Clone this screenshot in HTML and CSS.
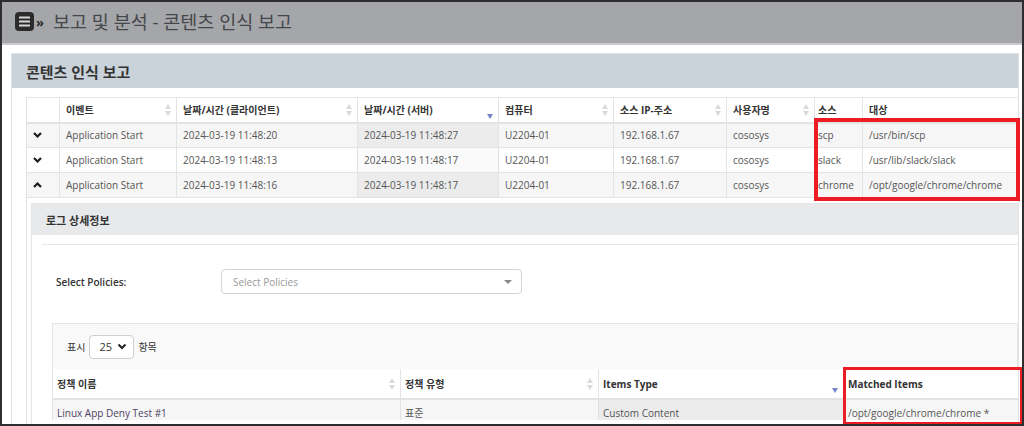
FILE: index.html
```html
<!DOCTYPE html>
<html lang="ko">
<head>
    <meta charset="UTF-8">
    <meta name="viewport" content="width=device-width, initial-scale=1.0">
    <title>콘텐츠 인식 보고</title>
    <link rel="stylesheet" href="styles.css">
</head>
<body>
    <div class="frame">
        <div class="topbar">
            <span class="menu-icon">
                <svg width="19" height="19" viewBox="0 0 19 19">
                    <rect x="0" y="0" width="19" height="19" rx="4" fill="#2b2b2b"/>
                    <rect x="4" y="4.5" width="11" height="2" rx="0.5" fill="#d8d8d8"/>
                    <rect x="4" y="8.5" width="11" height="2" rx="0.5" fill="#d8d8d8"/>
                    <rect x="4" y="12.5" width="11" height="2" rx="0.5" fill="#d8d8d8"/>
                </svg>
            </span>
            <span class="crumb-sep">»</span>
            <h1>보고 및 분석 - 콘텐츠 인식 보고</h1>
        </div>

        <div class="content">
            <div class="panel">
                <div class="panel-heading">콘텐츠 인식 보고</div>
                <div class="panel-body">
                    <table class="grid main-grid">
                        <colgroup>
                            <col style="width:33px">
                            <col style="width:117px">
                            <col style="width:181px">
                            <col style="width:141px">
                            <col style="width:115px">
                            <col style="width:113px">
                            <col style="width:88px">
                            <col style="width:48px">
                            <col>
                        </colgroup>
                        <thead>
                            <tr>
                                <th></th>
                                <th><div class="th-inner">이벤트<span class="sort both"></span></div></th>
                                <th><div class="th-inner">날짜/시간 (클라이언트)<span class="sort both"></span></div></th>
                                <th><div class="th-inner">날짜/시간 (서버)<span class="sort desc"></span></div></th>
                                <th><div class="th-inner">컴퓨터<span class="sort both"></span></div></th>
                                <th><div class="th-inner">소스 IP-주소<span class="sort both"></span></div></th>
                                <th><div class="th-inner">사용자명<span class="sort both"></span></div></th>
                                <th class="tight"><div class="th-inner">소스</div></th>
                                <th><div class="th-inner">대상</div></th>
                            </tr>
                        </thead>
                        <tbody>
                            <tr class="odd">
                                <td class="toggle"><svg width="9" height="6" viewBox="0 0 9 6"><polyline points="1,1 4.5,4.5 8,1" fill="none" stroke="#1e1e1e" stroke-width="2.2"/></svg></td>
                                <td>Application Start</td>
                                <td>2024-03-19 11:48:20</td>
                                <td class="sorted">2024-03-19 11:48:27</td>
                                <td>U2204-01</td>
                                <td>192.168.1.67</td>
                                <td>cososys</td>
                                <td class="tight">scp</td>
                                <td>/usr/bin/scp</td>
                            </tr>
                            <tr class="even">
                                <td class="toggle"><svg width="9" height="6" viewBox="0 0 9 6"><polyline points="1,1 4.5,4.5 8,1" fill="none" stroke="#1e1e1e" stroke-width="2.2"/></svg></td>
                                <td>Application Start</td>
                                <td>2024-03-19 11:48:13</td>
                                <td class="sorted">2024-03-19 11:48:17</td>
                                <td>U2204-01</td>
                                <td>192.168.1.67</td>
                                <td>cososys</td>
                                <td class="tight">slack</td>
                                <td>/usr/lib/slack/slack</td>
                            </tr>
                            <tr class="odd">
                                <td class="toggle"><svg width="9" height="6" viewBox="0 0 9 6"><polyline points="1,5 4.5,1.5 8,5" fill="none" stroke="#1e1e1e" stroke-width="2.2"/></svg></td>
                                <td>Application Start</td>
                                <td>2024-03-19 11:48:16</td>
                                <td class="sorted">2024-03-19 11:48:17</td>
                                <td>U2204-01</td>
                                <td>192.168.1.67</td>
                                <td>cososys</td>
                                <td class="tight">chrome</td>
                                <td>/opt/google/chrome/chrome</td>
                            </tr>
                            <tr class="detail-row">
                                <td colspan="9">
                                    <div class="detail">
                                        <div class="detail-heading">로그 상세정보</div>
                                        <div class="detail-body">
                                            <div class="policy-row">
                                                <label>Select Policies:</label>
                                                <div class="select">
                                                    <span class="placeholder">Select Policies</span>
                                                    <span class="caret"></span>
                                                </div>
                                            </div>
                                            <div class="sub-section">
                                                <div class="length-bar">
                                                    표시
                                                    <span class="len-select">25
                                                        <svg width="10" height="7" viewBox="0 0 10 7"><polyline points="1.5,1.5 5,5 8.5,1.5" fill="none" stroke="#222" stroke-width="2"/></svg>
                                                    </span>
                                                    항목
                                                </div>
                                                <table class="grid sub-grid">
                                                    <colgroup>
                                                        <col style="width:348px">
                                                        <col style="width:198px">
                                                        <col style="width:245px">
                                                        <col>
                                                    </colgroup>
                                                    <thead>
                                                        <tr>
                                                            <th><div class="th-inner">정책 이름<span class="sort both"></span></div></th>
                                                            <th><div class="th-inner">정책 유형<span class="sort both"></span></div></th>
                                                            <th><div class="th-inner">Items Type<span class="sort desc"></span></div></th>
                                                            <th><div class="th-inner">Matched Items</div></th>
                                                        </tr>
                                                    </thead>
                                                    <tbody>
                                                        <tr class="odd">
                                                            <td class="link">Linux App Deny Test #1</td>
                                                            <td>표준</td>
                                                            <td class="sorted">Custom Content</td>
                                                            <td>/opt/google/chrome/chrome *</td>
                                                        </tr>
                                                    </tbody>
                                                </table>
                                            </div>
                                        </div>
                                    </div>
                                </td>
                            </tr>
                        </tbody>
                    </table>
                </div>
            </div>
        </div>

        <div class="mark mark-top"></div>
        <div class="mark mark-bottom"></div>
    </div>
</body>
</html>
```

FILE: styles.css
```css
* {
    box-sizing: border-box;
}

body {
    margin: 0;
    background: #fff;
    font-family: 'Open Sans', 'Noto Sans CJK KR', sans-serif;
    font-size: 10px;
    color: #555;
}

.frame {
    position: relative;
    width: 1024px;
    height: 426px;
    border: 2px solid #2e2e2e;
    overflow: hidden;
    background: #fff;
}

/* top title bar */
.topbar {
    display: flex;
    align-items: center;
    height: 43px;
    padding: 0 0 3px 13px;
    background: #a5a6aa;
    border-bottom: 2px solid #c9cacd;
}

.menu-icon {
    display: flex;
    width: 19px;
    height: 19px;
}

.crumb-sep {
    margin: 2px 0 0 2px;
    font-size: 13px;
    font-weight: 700;
    color: #2b2b2b;
}

.topbar h1 {
    margin: 0 0 0 9px;
    font-size: 18.5px;
    font-weight: 400;
    color: #45474b;
}

.content {
    padding: 8px 0 0 9px;
}

.panel {
    width: 1008px;
    height: 400px;
    border: 1px solid #dfe3e7;
}

.panel-heading {
    display: flex;
    align-items: center;
    height: 34px;
    padding-left: 14px;
    background: #cbd3da;
    font-size: 15px;
    font-weight: 600;
    color: #333;
}

.panel-body {
    padding: 9px 0 0 14px;
}

/* data grids */
.grid {
    border-collapse: collapse;
    table-layout: fixed;
}

.main-grid {
    width: 992px;
    border-top: 1px solid #e6e6e6;
    border-left: 1px solid #e3e3e3;
}

.grid th {
    height: 25px;
    padding: 0 4px 0 6px;
    text-align: left;
    font-weight: 700;
    color: #333;
    background: #fff;
    border-left: 1px solid #e3e3e3;
    border-bottom: 2px solid #e3e3e3;
}

.th-inner {
    display: flex;
    align-items: center;
    justify-content: space-between;
    white-space: nowrap;
}

.grid td {
    height: 25px;
    padding: 0 5px 0 6px;
    white-space: nowrap;
    overflow: hidden;
    border-left: 1px solid #e3e3e3;
    border-bottom: 1px solid #e3e3e3;
}

.grid tr.odd td {
    background: #f6f6f6;
}

.grid tr.odd td.sorted {
    background: #ececec;
}

.grid tr.even td.sorted {
    background: #fafafa;
}

.grid .tight {
    padding-left: 3px;
}

.grid td.toggle {
    padding-left: 6px;
}

.grid td.toggle svg {
    display: block;
}

.grid td.link {
    color: #4f3f66;
}

/* sort indicators */
.sort {
    position: relative;
    width: 7px;
    height: 14px;
    flex-shrink: 0;
}

.sort.both::before,
.sort.both::after {
    content: "";
    position: absolute;
    left: 0;
    border-left: 3.5px solid transparent;
    border-right: 3.5px solid transparent;
}

.sort.both::before {
    top: 1px;
    border-bottom: 5px solid #dadada;
}

.sort.both::after {
    bottom: 1px;
    border-top: 5px solid #dadada;
}

.sort.desc::after {
    content: "";
    position: absolute;
    left: 0;
    bottom: -2px;
    border-left: 3.5px solid transparent;
    border-right: 3.5px solid transparent;
    border-top: 5px solid #7683cc;
}

/* detail (child row) */
.detail-row td {
    height: auto;
    padding: 5px 0 0 4px;
    background: #fff;
    border-bottom: none;
}

.detail {
    border: 1px solid #e4e5e7;
    border-right: none;
    height: 230px;
}

.detail-heading {
    display: flex;
    align-items: center;
    height: 31px;
    padding-left: 14px;
    background: #e8e9eb;
    font-size: 11px;
    font-weight: 700;
    color: #333;
}

.detail-body {
    padding-left: 10px;
    border-top: 9px solid #fff;
}

.policy-row {
    display: flex;
    align-items: center;
    padding: 24px 0 0 14px;
    border-top: 1px solid #e8e8e8;
}

.policy-row label {
    width: 165px;
    color: #333;
    font-weight: 600;
}

.select {
    display: flex;
    align-items: center;
    justify-content: space-between;
    width: 301px;
    height: 25px;
    padding: 0 9px 0 11px;
    border: 1px solid #d3d3d3;
    border-radius: 4px;
    background: #fff;
}

.placeholder {
    color: #999;
}

.caret {
    border-left: 4px solid transparent;
    border-right: 4px solid transparent;
    border-top: 4px solid #888;
}

.sub-section {
    margin: 29px 0 0 10px;
}

.length-bar {
    display: flex;
    align-items: center;
    gap: 4px;
    height: 46px;
    padding-left: 14px;
    background: #f8f9f8;
    border: 1px solid #e4e6e4;
    border-bottom: none;
    color: #333;
}

.len-select {
    display: flex;
    align-items: center;
    justify-content: space-between;
    width: 45px;
    height: 24px;
    padding: 0 6px 0 9px;
    border: 1px solid #cfcfcf;
    border-radius: 4px;
    background: #fff;
    color: #333;
    font-size: 11px;
}

.sub-grid {
    width: 966px;
    border-left: 1px solid #e3e3e3;
}

.sub-grid th {
    height: 30px;
    padding-left: 4px;
}

.sub-grid td {
    padding-left: 4px;
}

/* annotation boxes */
.mark {
    position: absolute;
    border: 4px solid #ec1c24;
}

.mark-top {
    left: 812px;
    top: 116px;
    width: 206px;
    height: 83px;
}

.mark-bottom {
    left: 841px;
    top: 365px;
    width: 180px;
    height: 58px;
    border-width: 3px;
}
```
